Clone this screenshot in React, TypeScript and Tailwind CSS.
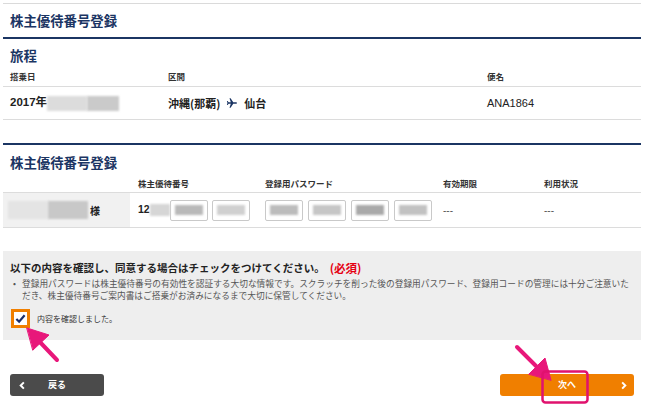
import React from "react";

const Blur = ({ w, h, cls }: { w: string; h: string; cls: string }) => (
  <span className={`inline-block ${w} ${h} ${cls} blur-[1px]`} />
);

const InputBox = ({ shade }: { shade: string }) => (
  <div className="w-[38px] h-[21px] border border-[#c9c9c9] rounded-[2px] bg-white flex items-center justify-center shrink-0">
    <div className={`w-[28px] h-[10px] blur-[1px] ${shade}`} />
  </div>
);

export default function App() {
  return (
    <div className="relative w-[650px] h-[412px] bg-white overflow-hidden font-[family-name:'Liberation_Sans','Noto_Sans_CJK_JP',sans-serif] text-[#222]">
      <div className="ml-[3px] mt-[3px] w-[638px] border-t border-[#dadada]">
        <div className="h-[33px] flex items-center pl-[7px] text-[13.4px] font-bold text-[#1b3563] font-['Noto_Sans_CJK_JP']">
          株主優待番号登録
        </div>
        <div className="h-[2px] bg-[#1b3563]" />

        {/* 旅程 */}
        <div className="mt-[6px] h-[20px] leading-[20px] pl-[7px] text-[13.4px] font-bold text-[#1b3563] font-['Noto_Sans_CJK_JP']">
          旅程
        </div>
        <div className="grid grid-cols-[158px_319px_1fr] px-[7px] pt-[5px] pb-[4px] leading-[12px] text-[8.5px] font-bold text-[#333] border-b border-[#dcdcdc] font-['Noto_Sans_CJK_JP']">
          <div>搭乗日</div>
          <div>区間</div>
          <div>便名</div>
        </div>
        <div className="grid grid-cols-[158px_319px_1fr] px-[7px] h-[33px] items-center border-b border-[#dcdcdc]">
          <div className="flex items-center text-[11.5px] font-bold">
            <span>2017年</span>
            <span className="flex">
              <Blur w="w-[40px]" h="h-[15px]" cls="bg-[#dcdcdc]" />
              <Blur w="w-[32px]" h="h-[15px]" cls="bg-[#cacaca]" />
            </span>
          </div>
          <div className="flex items-center text-[11px] font-bold font-['Noto_Sans_CJK_JP']">
            <span>沖縄(那覇)</span>
            <svg viewBox="0 0 24 24" className="w-[12px] h-[12px] mx-[6px]" fill="#1b3563">
              <path d="M22 12c0-.9-.7-1.4-1.6-1.4H14.5L9.2 2.5H7l2.6 8.1H5.1L3.4 8.2H1.8l1.1 3.8-1.1 3.8h1.6l1.7-2.4h4.5L7 21.5h2.2l5.3-8.1h5.9c.9 0 1.6-.5 1.6-1.4z" />
            </svg>
            <span>仙台</span>
          </div>
          <div className="text-[11px]">ANA1864</div>
        </div>

        {/* 株主優待番号登録 */}
        <div className="mt-[23px] h-[2px] bg-[#1b3563]" />
        <div className="mt-[7px] h-[20px] leading-[20px] pl-[7px] text-[13.4px] font-bold text-[#1b3563] font-['Noto_Sans_CJK_JP']">
          株主優待番号登録
        </div>
        <div className="flex pt-[5px] pb-[3px] leading-[12px] text-[8.5px] font-bold text-[#333] border-b border-[#dcdcdc] font-['Noto_Sans_CJK_JP']">
          <div className="w-[127px]" />
          <div className="w-[127px] ml-[8px]">株主優待番号</div>
          <div className="w-[178px]">登録用パスワード</div>
          <div className="w-[101px]">有効期限</div>
          <div className="flex-1">利用状況</div>
        </div>
        <div className="flex h-[35px] items-center border-b border-[#dcdcdc]">
          <div className="w-[127px] h-full bg-[#f1f1f1] flex items-center pl-[5px]">
            <span className="flex">
              <Blur w="w-[40px]" h="h-[18px]" cls="bg-[#e4e4e4]" />
              <Blur w="w-[40px]" h="h-[18px]" cls="bg-[#c8c8c8]" />
            </span>
            <span className="ml-[2px] text-[10px] font-bold font-['Noto_Sans_CJK_JP']">様</span>
          </div>
          <div className="w-[127px] ml-[8px] flex items-center">
            <span className="text-[10.5px] font-bold w-[12px]">12</span>
            <Blur w="w-[20px]" h="h-[12px]" cls="bg-[#d6d6d6]" />
            <div className="flex gap-[4px]">
              <InputBox shade="bg-[#b9b9b9]" />
              <InputBox shade="bg-[#d0d0d0]" />
            </div>
          </div>
          <div className="w-[178px] flex items-center gap-[5px]">
            <InputBox shade="bg-[#bcbcbc]" />
            <InputBox shade="bg-[#c6c6c6]" />
            <InputBox shade="bg-[#a9a9a9]" />
            <InputBox shade="bg-[#c2c2c2]" />
          </div>
          <div className="w-[101px] text-[10px] text-[#555]">---</div>
          <div className="flex-1 text-[10px] text-[#555]">---</div>
        </div>

        {/* agreement box */}
        <div className="mt-[23px] h-[89px] bg-[#eeeeee] px-[7px] pt-[9px] font-['Noto_Sans_CJK_JP']">
          <div className="flex items-center leading-[16px] text-[10.5px] font-bold text-[#222] whitespace-nowrap">
            <span>以下の内容を確認し、同意する場合はチェックをつけてください。</span>
            <span className="ml-[5px] text-[11.5px] text-[#e50012]">(必須)</span>
          </div>
          <div className="mt-[2px] flex text-[8.7px] leading-[12px] text-[#555]">
            <span className="w-[12px] pl-[3px]">•</span>
            <div className="whitespace-nowrap">
              登録用パスワードは株主優待番号の有効性を認証する大切な情報です。スクラッチを削った後の登録用パスワード、登録用コードの管理には十分ご注意いた
              <br />
              だき、株主優待番号ご案内書はご搭乗がお済みになるまで大切に保管してください。
            </div>
          </div>
          <div className="mt-[7px] flex items-center">
            <div className="w-[19px] h-[19px] ml-[1px] border-[3px] border-[#f07f00] bg-white flex items-center justify-center">
              <svg viewBox="0 0 12 12" className="w-[11px] h-[11px]">
                <path d="M1.5 6.5 L4.5 9.5 L10.5 2.5" fill="none" stroke="#1b2f6b" strokeWidth="2.4" />
              </svg>
            </div>
            <span className="ml-[7px] text-[8px] text-[#333]">内容を確認しました。</span>
          </div>
        </div>

        {/* buttons */}
        <div className="mt-[34px] flex justify-between px-[7px]">
          <div className="w-[94px] h-[22px] rounded-[3px] bg-[#4b4b4b] flex items-center text-white">
            <svg viewBox="0 0 10 10" className="w-[9px] h-[9px] ml-[8px]">
              <path d="M6.5 1.5 L3 5 L6.5 8.5" fill="none" stroke="white" strokeWidth="2.2" />
            </svg>
            <span className="ml-[21px] text-[9px] font-bold font-['Noto_Sans_CJK_JP']">戻る</span>
          </div>
          <div className="relative w-[134px] h-[22px] rounded-[3px] bg-[#f07f00] flex items-center justify-center text-white">
            <span className="text-[9px] font-bold font-['Noto_Sans_CJK_JP']">次へ</span>
            <svg viewBox="0 0 10 10" className="absolute right-[6px] top-[6.5px] w-[9px] h-[9px]">
              <path d="M3.5 1.5 L7 5 L3.5 8.5" fill="none" stroke="white" strokeWidth="2.2" />
            </svg>
          </div>
        </div>
      </div>

      {/* annotations */}
      <svg className="absolute inset-0 pointer-events-none" width="650" height="412" viewBox="0 0 650 412">
        <g fill="#e8177a" stroke="#e8177a" strokeLinecap="round">
          <line x1="57" y1="360" x2="38" y2="340" strokeWidth="4" />
          <polygon points="27,328 49,335 33,350" strokeWidth="1" strokeLinejoin="round" />
          <line x1="517" y1="347" x2="540" y2="370" strokeWidth="4" />
          <polygon points="551,380 545,358 529,374" strokeWidth="1" strokeLinejoin="round" />
        </g>
        <rect x="542.5" y="371.5" width="45" height="31" rx="3" fill="none" stroke="#e0126e" strokeWidth="2.5" />
      </svg>
    </div>
  );
}
